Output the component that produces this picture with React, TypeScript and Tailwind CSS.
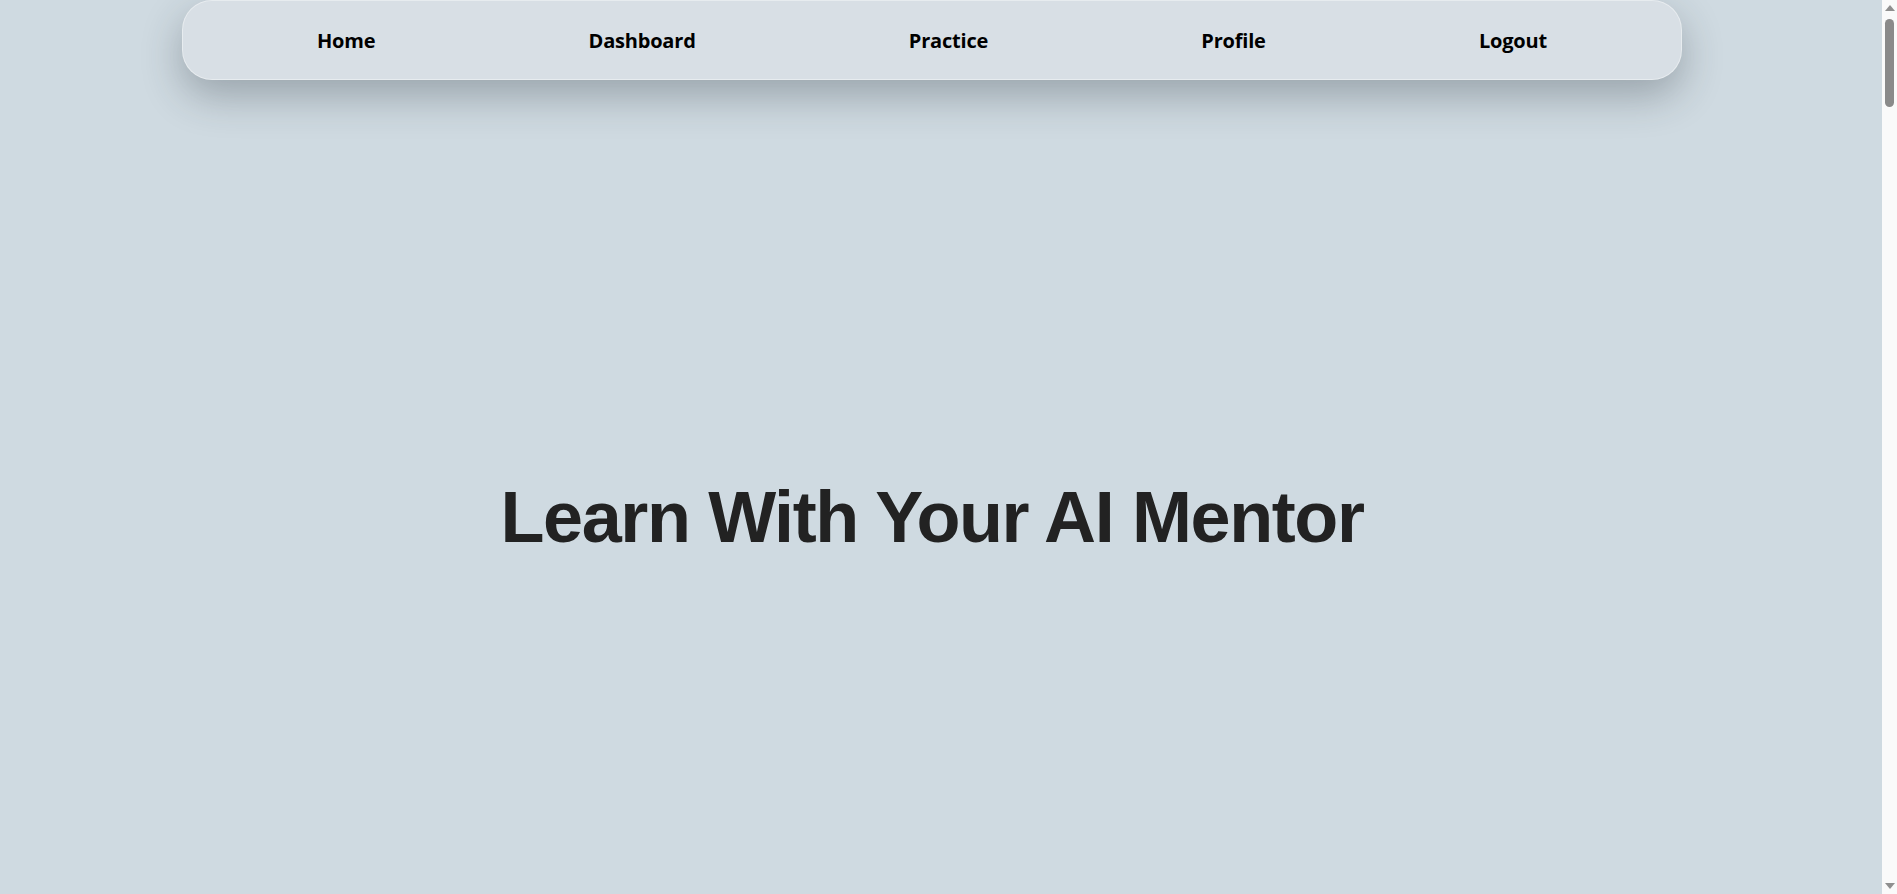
const NAV_LINKS = ['Home', 'Dashboard', 'Practice', 'Profile', 'Logout']

function NavBar() {
  return (
    <nav className="relative z-10 mx-auto flex h-[80px] w-[1500px] items-center justify-between rounded-[30px] border border-white/40 bg-[#d8dfe5] px-[134px] pt-[2px] shadow-[0_16px_40px_rgba(40,50,60,0.32)]">
      {NAV_LINKS.map((label) => (
        <a
          key={label}
          href="#"
          className="text-[20px] font-bold tracking-[-0.2px] text-black [font-family:'Open_Sans','Noto_Sans',sans-serif]"
        >
          {label}
        </a>
      ))}
    </nav>
  )
}

// the browser's scrollbar as it shows in the screenshot
function FakeScrollbar() {
  return (
    <div className="fixed top-0 right-0 z-20 flex h-screen w-[15px] flex-col items-center justify-between bg-[#fafafa] py-[5px]">
      <div className="flex w-full flex-col items-center gap-[8px]">
        <svg width="10" height="6" viewBox="0 0 10 6">
          <path d="M5 0L10 6H0z" fill="#8f8f8f" />
        </svg>
        <div className="h-[88px] w-[9px] rounded-full bg-[#8a8a8a]" />
      </div>
      <svg width="10" height="6" viewBox="0 0 10 6">
        <path d="M0 0h10L5 6z" fill="#8f8f8f" />
      </svg>
    </div>
  )
}

export default function App() {
  return (
    <div className="min-h-screen bg-[#cfdae1] pr-[33px]">
      <NavBar />

      {/* Hero */}
      <section className="flex h-[874px] items-center justify-center">
        <h1 className="text-[72px] leading-none font-bold tracking-[-1.4px] text-[#222222] [font-family:'Liberation_Sans',Arial,sans-serif]">
          Learn With Your AI Mentor
        </h1>
      </section>

      {/* rest of the page sits below the fold */}
      <div className="h-[14000px]" />

      <FakeScrollbar />
    </div>
  )
}
